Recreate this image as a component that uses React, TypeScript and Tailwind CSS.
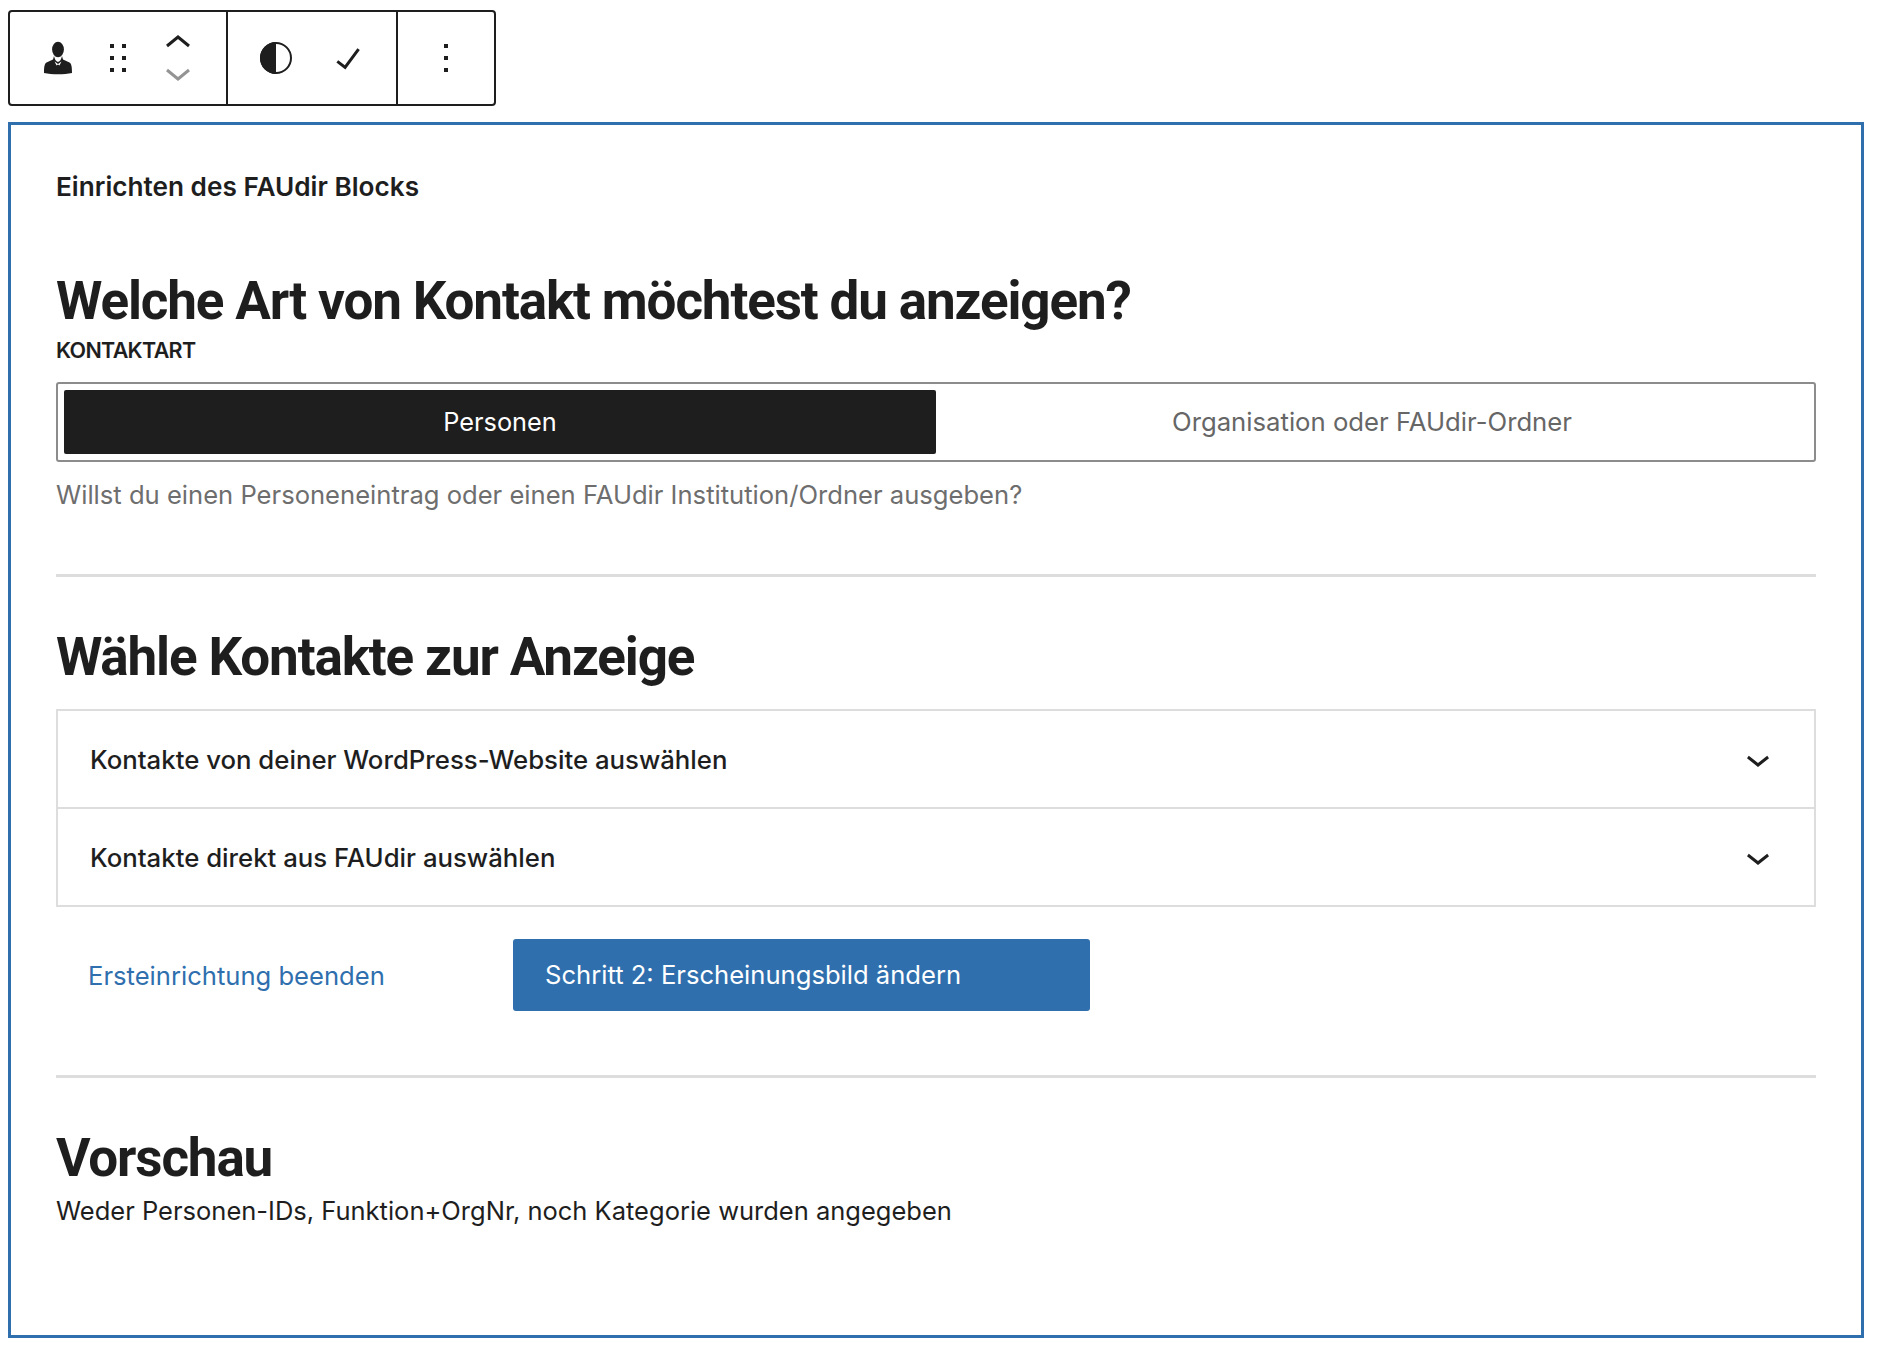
const font = "[font-family:Inter,'Liberation_Sans',sans-serif]";
const headFont = "[font-family:Roboto,'Liberation_Sans',sans-serif]";

const PersonIcon = () => (
  <svg width="48" height="48" viewBox="0 0 48 48" fill="#1e1e1e">
    <ellipse cx="24" cy="15.5" rx="5.9" ry="7.8" />
    <path d="M20 22 C20.8 25.5 22 27.5 24 28 C26 27.5 27.2 25.5 28 22 L29 25.5 L35.5 28.5 C37.5 29.5 38 33 38 39 C30 40.8 18 40.8 10 39 C10 33 10.5 29.5 12.5 28.5 L19 25.5 Z" />
    <path d="M20.5 27.5 L24 30 L27.5 27.5 L25.4 31.5 L24.6 30.8 L23.4 30.8 L22.6 31.5 Z" fill="#fff" />
  </svg>
);

const DragIcon = () => (
  <svg width="48" height="48" viewBox="0 0 24 24" fill="#1e1e1e">
    <path d="M8 7h2V5H8v2zm0 6h2v-2H8v2zm0 6h2v-2H8v2zm6-14v2h2V5h-2zm0 8h2v-2h-2v2zm0 6h2v-2h-2v2z" />
  </svg>
);

const MoverIcon = () => (
  <svg width="48" height="64" viewBox="0 0 48 64" fill="none" strokeWidth="3">
    <path d="M13 20 L24 11 L35 20" stroke="#1e1e1e" />
    <path d="M13 44 L24 53 L35 44" stroke="#949494" />
  </svg>
);

const ContrastIcon = () => (
  <svg width="48" height="48" viewBox="0 0 48 48" fill="none">
    <circle cx="24" cy="24" r="15" stroke="#1e1e1e" strokeWidth="2" />
    <path d="M24 8 A16 16 0 0 0 24 40 Z" fill="#1e1e1e" />
  </svg>
);

const CheckIcon = () => (
  <svg width="48" height="48" viewBox="0 0 24 24" fill="#1e1e1e">
    <path d="M16.7 7.1l-6.3 8.5-3.3-2.5-.9 1.2 4.5 3.4L17.9 8z" />
  </svg>
);

const MoreIcon = () => (
  <svg width="48" height="48" viewBox="0 0 24 24" fill="#1e1e1e">
    <path d="M13 19h-2v-2h2v2zm0-6h-2v-2h2v2zm0-6h-2V5h2v2z" />
  </svg>
);

const ChevronDown = () => (
  <svg width="48" height="48" viewBox="0 0 24 24" fill="#1e1e1e">
    <path d="M17.5 11.6L12 16l-5.5-4.4.9-1.2L12 14l4.6-3.6z" />
  </svg>
);

const Divider = () => <div className="h-[3px] bg-[#dddddd]"></div>;

const AccordionRow = ({ label, last }: { label: string; last?: boolean }) => (
  <div className={`flex items-center justify-between pl-[32px] pr-[32px] ${last ? "h-[96px]" : "h-[98px] border-b-[2px] border-[#dddddd]"}`}>
    <span className="pt-[2px] text-[25.75px] font-[450] text-[#1e1e1e]">{label}</span>
    <ChevronDown />
  </div>
);

const headingClass = `text-[53px] font-bold leading-[64px] tracking-[-1.15px] text-[#1e1e1e] ${headFont}`;

export default function App() {
  return (
    <div className={`min-h-[1360px] bg-white pl-[8px] pt-[10px] ${font}`}>
      <div className="flex h-[96px] w-[488px] rounded-[4px] border-[2px] border-[#1e1e1e]">
        <div className="flex w-[218px] items-center gap-[12px] border-r-[2px] border-[#1e1e1e] pl-[24px]">
          <PersonIcon />
          <DragIcon />
          <MoverIcon />
        </div>
        <div className="flex w-[170px] items-center gap-[24px] border-r-[2px] border-[#1e1e1e] pl-[24px]">
          <ContrastIcon />
          <CheckIcon />
        </div>
        <div className="flex flex-1 items-center justify-center">
          <MoreIcon />
        </div>
      </div>

      <div className="mt-[16px] h-[1216px] w-[1856px] border-[3px] border-[#2f6fae] px-[45px] pt-[44px]">
        <p className="text-[26.2px] font-semibold leading-[36px] text-[#1e1e1e]">Einrichten des FAUdir Blocks</p>

        <h2 className={`mt-[64px] ${headingClass}`}>Welche Art von Kontakt möchtest du anzeigen?</h2>
        <p className="mt-[4px] text-[21.5px] font-semibold leading-[27px] tracking-[-0.7px] text-[#1e1e1e]">KONTAKTART</p>

        <div className="mt-[18px] flex h-[80px] items-center rounded-[3px] border-[2px] border-[#8c8c8c] px-[6px]">
          <div className="flex h-[64px] flex-1 items-center justify-center rounded-[2px] bg-[#1e1e1e] text-[25.3px] text-white">
            Personen
          </div>
          <div className="flex h-[64px] flex-1 items-center justify-center text-[25.7px] text-[#666666]">
            Organisation oder FAUdir-Ordner
          </div>
        </div>

        <p className="mt-[16px] text-[25.6px] leading-[34px] text-[#6e6e6e]">
          Willst du einen Personeneintrag oder einen FAUdir Institution/Ordner ausgeben?
        </p>

        <div className="mt-[62px]">
          <Divider />
        </div>

        <h2 className={`mt-[48px] ${headingClass}`}>Wähle Kontakte zur Anzeige</h2>

        <div className="mt-[20px] border-[2px] border-[#dddddd]">
          <AccordionRow label="Kontakte von deiner WordPress-Website auswählen" />
          <AccordionRow label="Kontakte direkt aus FAUdir auswählen" last />
        </div>

        <div className="mt-[32px] flex items-center">
          <span className="w-[457px] pl-[32px] pt-[2px] text-[25.6px] text-[#2f6fae]">Ersteinrichtung beenden</span>
          <div className="flex h-[72px] w-[577px] items-center rounded-[3px] bg-[#2f6fae] pl-[32px] pt-[1px] text-[25.6px] text-white">
            Schritt 2: Erscheinungsbild ändern
          </div>
        </div>

        <div className="mt-[64px]">
          <Divider />
        </div>

        <h2 className={`mt-[48px] ${headingClass}`}>Vorschau</h2>
        <p className="mt-[4px] text-[25.5px] leading-[34px] text-[#1e1e1e]">
          Weder Personen-IDs, Funktion+OrgNr, noch Kategorie wurden angegeben
        </p>
      </div>
    </div>
  );
}
